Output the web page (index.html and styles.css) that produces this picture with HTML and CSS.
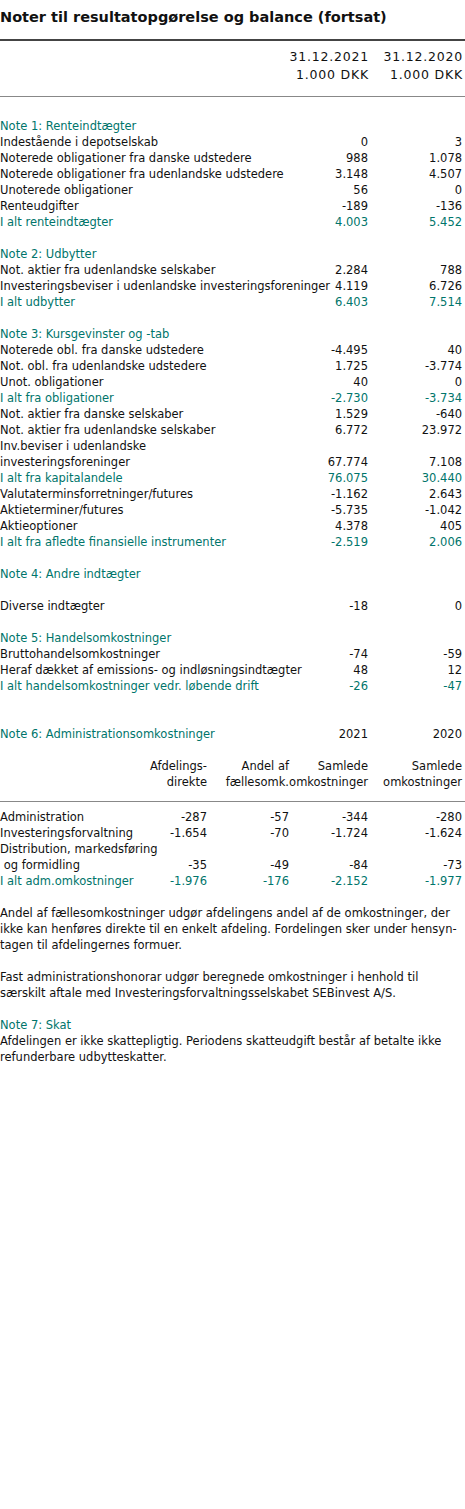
FILE: index.html
```html
<!DOCTYPE html>
<html lang="da">
<head>
  <meta charset="UTF-8">
  <meta name="viewport" content="width=device-width, initial-scale=1.0">
  <title>Noter til resultatopgørelse og balance (fortsat)</title>
  <link rel="stylesheet" href="styles.css">
</head>
<body>

<div class="page">
  <h1>Noter til resultatopgørelse og balance (fortsat)</h1>

  <div class="period">
    <div class="c1">31.12.2021<br>1.000 DKK</div>
    <div class="c2">31.12.2020<br>1.000 DKK</div>
  </div>

  <table class="notes">
    <colgroup><col class="lbl"><col class="n1"><col class="n2"></colgroup>
    <tr class="note"><td colspan="3">Note 1: Renteindtægter</td></tr>
    <tr><td>Indestående i depotselskab</td><td>0</td><td>3</td></tr>
    <tr><td>Noterede obligationer fra danske udstedere</td><td>988</td><td>1.078</td></tr>
    <tr><td>Noterede obligationer fra udenlandske udstedere</td><td>3.148</td><td>4.507</td></tr>
    <tr><td>Unoterede obligationer</td><td>56</td><td>0</td></tr>
    <tr><td>Renteudgifter</td><td>-189</td><td>-136</td></tr>
    <tr class="total"><td>I alt renteindtægter</td><td>4.003</td><td>5.452</td></tr>
    <tr class="gap"><td colspan="3"></td></tr>

    <tr class="note"><td colspan="3">Note 2: Udbytter</td></tr>
    <tr><td>Not. aktier fra udenlandske selskaber</td><td>2.284</td><td>788</td></tr>
    <tr><td>Investeringsbeviser i udenlandske investeringsforeninger</td><td>4.119</td><td>6.726</td></tr>
    <tr class="total"><td>I alt udbytter</td><td>6.403</td><td>7.514</td></tr>
    <tr class="gap"><td colspan="3"></td></tr>

    <tr class="note"><td colspan="3">Note 3: Kursgevinster og -tab</td></tr>
    <tr><td>Noterede obl. fra danske udstedere</td><td>-4.495</td><td>40</td></tr>
    <tr><td>Not. obl. fra udenlandske udstedere</td><td>1.725</td><td>-3.774</td></tr>
    <tr><td>Unot. obligationer</td><td>40</td><td>0</td></tr>
    <tr class="total"><td>I alt fra obligationer</td><td>-2.730</td><td>-3.734</td></tr>
    <tr><td>Not. aktier fra danske selskaber</td><td>1.529</td><td>-640</td></tr>
    <tr><td>Not. aktier fra udenlandske selskaber</td><td>6.772</td><td>23.972</td></tr>
    <tr><td>Inv.beviser i udenlandske<br>investeringsforeninger</td><td>67.774</td><td>7.108</td></tr>
    <tr class="total"><td>I alt fra kapitalandele</td><td>76.075</td><td>30.440</td></tr>
    <tr><td>Valutaterminsforretninger/futures</td><td>-1.162</td><td>2.643</td></tr>
    <tr><td>Aktieterminer/futures</td><td>-5.735</td><td>-1.042</td></tr>
    <tr><td>Aktieoptioner</td><td>4.378</td><td>405</td></tr>
    <tr class="total"><td>I alt fra afledte finansielle instrumenter</td><td>-2.519</td><td>2.006</td></tr>
    <tr class="gap"><td colspan="3"></td></tr>

    <tr class="note"><td colspan="3">Note 4: Andre indtægter</td></tr>
    <tr class="gap"><td colspan="3"></td></tr>
    <tr><td>Diverse indtægter</td><td>-18</td><td>0</td></tr>
    <tr class="gap"><td colspan="3"></td></tr>

    <tr class="note"><td colspan="3">Note 5: Handelsomkostninger</td></tr>
    <tr><td>Bruttohandelsomkostninger</td><td>-74</td><td>-59</td></tr>
    <tr><td>Heraf dækket af emissions- og indløsningsindtægter</td><td>48</td><td>12</td></tr>
    <tr class="total"><td>I alt handelsomkostninger vedr. løbende drift</td><td>-26</td><td>-47</td></tr>
  </table>

  <table class="admin">
    <colgroup><col class="lbl"><col class="a1"><col class="a2"><col class="a3"><col class="a4"></colgroup>
    <tr class="note-row"><td colspan="3" class="note">Note 6: Administrationsomkostninger</td><td>2021</td><td>2020</td></tr>
    <tr class="gap"><td colspan="5"></td></tr>
    <tr class="head">
      <td></td>
      <td>Afdelings-<br>direkte</td>
      <td>Andel af<br>fællesomk.</td>
      <td>Samlede<br>omkostninger</td>
      <td>Samlede<br>omkostninger</td>
    </tr>
    <tr class="first"><td>Administration</td><td>-287</td><td>-57</td><td>-344</td><td>-280</td></tr>
    <tr><td>Investeringsforvaltning</td><td>-1.654</td><td>-70</td><td>-1.724</td><td>-1.624</td></tr>
    <tr><td>Distribution, markedsføring<br>&nbsp;og formidling</td><td>-35</td><td>-49</td><td>-84</td><td>-73</td></tr>
    <tr class="total"><td>I alt adm.omkostninger</td><td>-1.976</td><td>-176</td><td>-2.152</td><td>-1.977</td></tr>
  </table>

  <div class="text">
    <p>Andel af fællesomkostninger udgør afdelingens andel af de omkostninger, der<br>ikke kan henføres direkte til en enkelt afdeling. Fordelingen sker under hensyn-<br>tagen til afdelingernes formuer.</p>
    <p>Fast administrationshonorar udgør beregnede omkostninger i henhold til<br>særskilt aftale med Investeringsforvaltningsselskabet SEBinvest A/S.</p>
    <p><span class="note">Note 7: Skat</span><br>Afdelingen er ikke skattepligtig. Periodens skatteudgift består af betalte ikke<br>refunderbare udbytteskatter.</p>
  </div>
</div>

</body>
</html>
```

FILE: styles.css
```css
* {
  margin: 0;
  padding: 0;
  box-sizing: border-box;
}

body {
  background: #fff;
  color: #111;
  font-family: 'DejaVu Sans', sans-serif;
  font-size: 11.5px;
  line-height: 16px;
}

.page {
  width: 465px;
}

h1 {
  font-size: 14.5px;
  font-weight: bold;
  line-height: 20px;
  padding-top: 7px;
  margin-bottom: 12px;
  color: #111;
}

.period {
  display: flex;
  justify-content: flex-end;
  border-top: 2px solid #444;
  border-bottom: 1px solid #888;
  padding: 7px 0 12px;
  font-size: 12.5px;
  letter-spacing: 0.8px;
  line-height: 18px;
}

.period .c1 {
  width: 94px;
  margin-right: -1px;
  text-align: right;
}

.period .c2 {
  width: 97px;
  padding-right: 2px;
  text-align: right;
}

table {
  width: 100%;
  border-collapse: collapse;
  table-layout: fixed;
}

td {
  padding: 0;
  white-space: nowrap;
  text-align: right;
  vertical-align: bottom;
}

td:first-child {
  text-align: left;
}

td:last-child {
  padding-right: 3px;
}

.note,
.total td {
  color: #00756b;
}

.gap td {
  height: 16px;
}

.notes {
  margin-top: 21px;
}

.notes .lbl { width: 288px; }
.notes .n1 { width: 80px; }
.notes .n2 { width: 97px; }

.admin {
  margin-top: 32px;
}

.admin .lbl { width: 145px; }
.admin .a1 { width: 62px; }
.admin .a2 { width: 82px; }
.admin .a3 { width: 79px; }
.admin .a4 { width: 97px; }

.admin td.note {
  text-align: left;
}

.admin .head td {
  padding-bottom: 11px;
  border-bottom: 1px solid #888;
}

.admin .first td {
  padding-top: 7px;
}

.text {
  margin-top: 16px;
}

.text p {
  margin-bottom: 16px;
  white-space: nowrap;
}
```
